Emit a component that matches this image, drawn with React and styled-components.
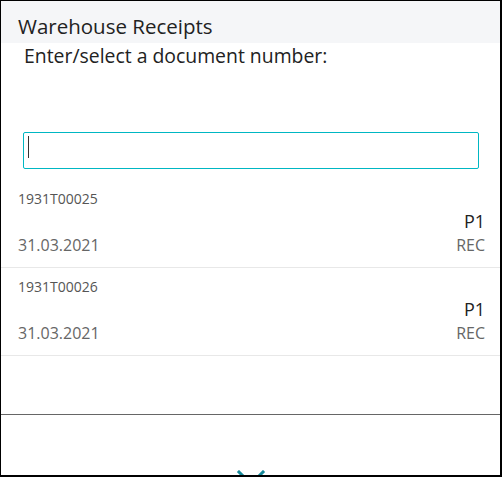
import React from "react";
import styled, { createGlobalStyle } from "styled-components";

const GlobalStyle = createGlobalStyle`
  html, body {
    margin: 0;
    padding: 0;
    background: #fff;
  }
  body {
    font-family: "Open Sans", "Noto Sans", sans-serif;
  }
`;

const Frame = styled.div`
  box-sizing: border-box;
  width: 502px;
  height: 477px;
  border: 1px solid #000;
  border-right-width: 2px;
  border-bottom-width: 2px;
  overflow: hidden;
  display: flex;
  flex-direction: column;
  background: #fff;
`;

const Header = styled.div`
  background: #f5f6f8;
  height: 42px;
  padding: 0 17px;
  display: flex;
  align-items: flex-end;
  flex-shrink: 0;
`;

const Title = styled.h1`
  margin: 0 0 4px 0;
  font-size: 20.5px;
  font-weight: 400;
  color: #222;
  line-height: 26px;
  white-space: nowrap;
`;

const Prompt = styled.div`
  margin: 1px 0 0 23px;
  font-size: 19.4px;
  color: #222;
  line-height: 24px;
  white-space: nowrap;
`;

const SearchWrap = styled.div`
  position: relative;
  margin: 64px 21px 0 22px;
`;

const SearchInput = styled.input`
  display: block;
  box-sizing: border-box;
  width: 100%;
  height: 37px;
  margin: 0;
  border: 1px solid #00b7c3;
  border-radius: 2px;
  outline: none;
  padding: 0 4px;
  font-family: inherit;
  font-size: 18px;
  color: #222;
  caret-color: transparent;
`;

const Caret = styled.span`
  position: absolute;
  left: 5px;
  top: 4px;
  width: 1px;
  height: 22px;
  background: #333;
  pointer-events: none;
`;

const List = styled.div`
  margin-top: 11px;
  display: flex;
  flex-direction: column;
`;

const Row = styled.div`
  display: grid;
  grid-template-columns: 1fr auto;
  padding: 9px 15px 11px 17px;
  border-bottom: 1px solid #e8e8e8;
`;

const DocNo = styled.div`
  grid-column: 1 / 3;
  font-size: 14px;
  line-height: 20px;
  color: #555;
`;

const Priority = styled.div`
  grid-column: 2;
  text-align: right;
  font-size: 18px;
  line-height: 24px;
  color: #222;
`;

const Date = styled.div`
  grid-column: 1;
  margin-top: 1px;
  font-size: 16px;
  line-height: 22px;
  color: #666;
`;

const Kind = styled.div`
  grid-column: 2;
  margin-top: 1px;
  text-align: right;
  font-size: 16px;
  line-height: 22px;
  color: #666;
`;

const Spacer = styled.div`
  flex: 1;
`;

const Footer = styled.div`
  flex-shrink: 0;
  box-sizing: border-box;
  height: 61px;
  border-top: 1px solid #666;
  display: flex;
  justify-content: center;
  align-items: flex-start;
  padding-top: 55px;
`;

const Chevron = styled.svg`
  flex-shrink: 0;
  width: 30px;
  height: 20px;
  color: #17899a;
`;

const rows = [
  { no: "1931T00025", priority: "P1", date: "31.03.2021", kind: "REC" },
  { no: "1931T00026", priority: "P1", date: "31.03.2021", kind: "REC" },
];

export default function App() {
  return (
    <>
      <GlobalStyle />
      <Frame>
        <Header>
          <Title>Warehouse Receipts</Title>
        </Header>
        <Prompt>Enter/select a document number:</Prompt>
        <SearchWrap>
          <SearchInput aria-label="Document number" />
          <Caret />
        </SearchWrap>
        <List>
          {rows.map((r) => (
            <Row key={r.no}>
              <DocNo>{r.no}</DocNo>
              <Priority>{r.priority}</Priority>
              <Date>{r.date}</Date>
              <Kind>{r.kind}</Kind>
            </Row>
          ))}
        </List>
        <Spacer />
        <Footer>
          <Chevron viewBox="0 0 30 20" fill="none" stroke="currentColor" strokeWidth="3" strokeLinecap="square">
            <path d="M3 2 L15 14 L27 2" />
          </Chevron>
        </Footer>
      </Frame>
    </>
  );
}
